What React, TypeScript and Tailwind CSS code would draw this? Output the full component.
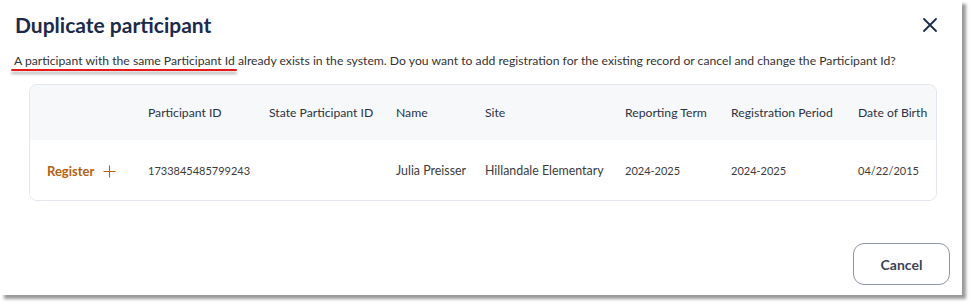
import React from "react"

const columns = [
  "",
  "Participant ID",
  "State Participant ID",
  "Name",
  "Site",
  "Reporting Term",
  "Registration Period",
  "Date of Birth",
]

// numeric cells render smaller so the digits match the old-style figures of the original
const row = [
  { text: "1733845485799243", num: true },
  { text: "", num: false },
  { text: "Julia Preisser", num: false },
  { text: "Hillandale Elementary", num: false },
  { text: "2024-2025", num: true },
  { text: "2024-2025", num: true },
  { text: "04/22/2015", num: true },
]

const gridCols = "grid grid-cols-[100px_121px_127px_89px_140px_106px_127px_98px]"

const App = () => {
  return (
    <div className="h-[304px] w-[972px] bg-white font-['Lato',sans-serif]">
      <div className="relative flex h-[295px] w-[962px] flex-col bg-white shadow-[4px_4px_3px_rgba(0,0,0,0.4)]">
        <div className="flex items-start justify-between pl-[15px] pr-[24px] pt-[10px]">
          <h2 className="text-[21px] font-bold leading-[30px] text-[#1b2b4b]">Duplicate participant</h2>
          <button className="mt-[7px] text-[#1b2b4b]">
            <svg width="16" height="16" viewBox="0 0 16 16" fill="none" stroke="currentColor" strokeWidth="1.8" strokeLinecap="round">
              <path d="M2 2L14 14M14 2L2 14" />
            </svg>
          </button>
        </div>

        <p className="mt-[12px] pl-[14px] text-[12.2px] leading-[18px] text-[#333]">
          A participant with the same Participant Id already exists in the system. Do you want to add registration for the existing record or cancel and change the Participant Id?
        </p>
        <div className="absolute left-[11px] top-[69px] h-[2px] w-[226px] rounded-full bg-[#e8191b] shadow-[0_3px_3px_rgba(0,0,0,0.35)]" />

        <div className="ml-[29px] mt-[14px] w-[908px] overflow-hidden rounded-[8px] border border-[#e3e7ed]">
          <div className={`${gridCols} h-[55px] items-center bg-[#f7f8fa] pt-[2px]`}>
            {columns.map((c, i) => (
              <div key={i} className="whitespace-nowrap pl-[18px] text-[12.2px] text-[#2a3344]">
                {c}
              </div>
            ))}
          </div>
          <div className={`${gridCols} h-[60px] items-center bg-white pt-[3px]`}>
            <div className="flex items-center gap-[9px] pl-[17px] text-[13px] font-bold text-[#b5600c]">
              Register
              <svg width="13" height="13" viewBox="0 0 13 13" stroke="currentColor" strokeWidth="1.1" fill="none">
                <path d="M6.5 0.5V12.5M0.5 6.5H12.5" />
              </svg>
            </div>
            {row.map((c, i) => (
              <div
                key={i}
                className={c.num ? "whitespace-nowrap pl-[18px] text-[11px] text-[#3c3c3c]" : "whitespace-nowrap pl-[18px] text-[12.4px] text-[#3c3c3c]"}
              >
                {c.text}
              </div>
            ))}
          </div>
        </div>

        <div className="mt-auto flex justify-end pb-[10px] pr-[12px]">
          <button className="h-[42px] w-[97px] rounded-[11px] border-[1.5px] border-[#8d96a6] text-[14px] font-bold text-[#3b4456]">
            Cancel
          </button>
        </div>
      </div>
    </div>
  )
}

export default App
